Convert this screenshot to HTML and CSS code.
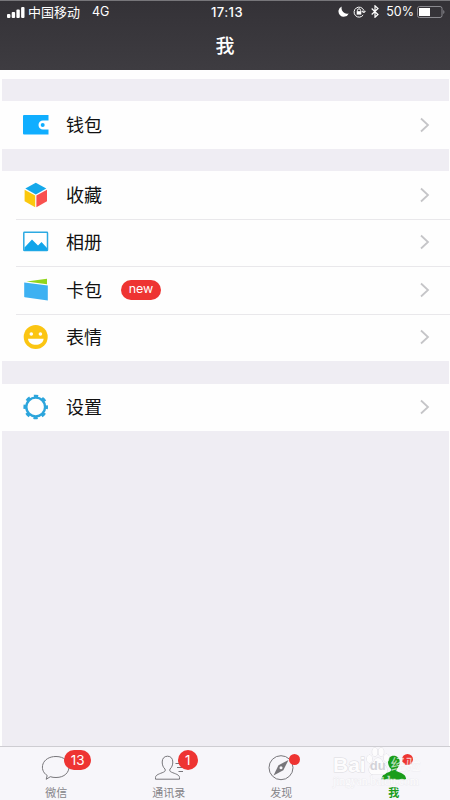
FILE: index.html
```html
<!DOCTYPE html>
<html lang="zh-CN">
<head>
  <meta charset="utf-8">
  <meta name="viewport" content="width=device-width, initial-scale=1">
  <title>我</title>
  <link rel="stylesheet" href="styles.css">
</head>
<body>
  <header class="header">
    <div class="status">
      <div class="status-left">
        <svg class="signal" width="18" height="11" viewBox="0 0 18 11" fill="#fff">
          <rect x="0" y="7" width="3.4" height="4" rx="1"/>
          <rect x="4.7" y="5" width="3.4" height="6" rx="1"/>
          <rect x="9.4" y="2.6" width="3.4" height="8.4" rx="1"/>
          <rect x="14.1" y="0" width="3.4" height="11" rx="1"/>
        </svg>
        <span class="carrier">中国移动</span>
        <span>4G</span>
      </div>
      <div class="time">17:13</div>
      <div class="status-right">
        <svg width="11" height="11" viewBox="0 0 11 11"><path d="M3.8.5A5.3 5.3 0 1 0 10.7 7.4 5.5 5.5 0 0 1 3.8.5Z" fill="#fff"/></svg>
        <svg class="lock" width="13" height="12" viewBox="0 0 13 12" fill="none" stroke="#fff">
          <path d="M10.7 4.2A5 5 0 1 0 10.2 9M8.9 5.2h3.4L10.7 7Z"/>
          <path d="M4.4 5.5V4.4a1.6 1.6 0 0 1 3.2 0v1.1"/>
          <rect x="3.7" y="5.2" width="4.6" height="3.4" fill="#fff" stroke="none"/>
        </svg>
        <svg class="bluetooth" width="8" height="13" viewBox="0 0 8 13" fill="none" stroke="#fff" stroke-width="1.2"><path d="M.7 3.5l6.3 6L4 12.3V.8L7 3.5.7 9.5"/></svg>
        <span class="percent">50%</span>
        <svg class="battery" width="28" height="12" viewBox="0 0 28 12">
          <rect x=".5" y=".5" width="24.5" height="11" rx="2" fill="none" stroke="#8b8a90"/>
          <rect x="2" y="2" width="11" height="8" fill="#fff"/>
          <path d="M26.3 4v4c1.5-.5 1.5-3.5 0-4Z" fill="#8b8a90"/>
        </svg>
      </div>
    </div>
    <h1 class="title">我</h1>
  </header>

  <main class="content">
    <section class="group">
      <a class="row">
        <svg class="icon" viewBox="0 0 26 26">
          <path d="M1 3h24.5v5.5H20a4.500 4.500 0 0 0 0 9h5.5v5H1a1 1 0 0 1-1-1V4a1 1 0 0 1 1-1Z" fill="#10aeff"/>
          <path d="M26 9.500h-6.500a3.500 3.500 0 0 0 0 7H26" fill="#fff"/>
          <circle cx="19.7" cy="13" r="2" fill="#10aeff"/>
        </svg>
        <span class="label">钱包</span>
        <svg class="arrow" viewBox="0 0 10 16"><path d="M1 1.5 8 8l-7 6.5"/></svg>
      </a>
    </section>

    <section class="group">
      <a class="row">
        <svg class="icon" viewBox="0 0 26 26">
          <path d="M12.8.8 23.3 6.6 12.8 12.4 2.3 6.6Z" fill="#14a8ea"/>
          <path d="M1.600 7.800l10.600 5.800v11.600L1.600 19.200Z" fill="#fbc80e"/>
          <path d="M24 7.800l-10.600 5.800v11.600L24 19.200Z" fill="#f9514f"/>
        </svg>
        <span class="label">收藏</span>
        <svg class="arrow" viewBox="0 0 10 16"><path d="M1 1.5 8 8l-7 6.5"/></svg>
      </a>
      <a class="row">
        <svg class="icon" viewBox="0 0 26 26">
          <rect x=".8" y="3.300" width="23.700" height="18.200" rx=".6" fill="#fff" stroke="#2caae2" stroke-width="1.500"/>
          <path d="M1.500 18.500 9 10.500l6 6 3.500-3.500 5.500 6v2.500H1.500Z" fill="#10a5ea"/>
        </svg>
        <span class="label">相册</span>
        <svg class="arrow" viewBox="0 0 10 16"><path d="M1 1.5 8 8l-7 6.5"/></svg>
      </a>
      <a class="row">
        <svg class="icon" viewBox="0 0 26 26">
          <path d="M3.500 4.500 24 1.700v5.600Z" fill="#91d51c"/>
          <path d="M1.200 5.500l23.600 3v15L1.800 20.300a.8.8 0 0 1-.6-.8Z" fill="#3db1f2"/>
        </svg>
        <span class="label">卡包</span>
        <span class="new">new</span>
        <svg class="arrow" viewBox="0 0 10 16"><path d="M1 1.5 8 8l-7 6.5"/></svg>
      </a>
      <a class="row">
        <svg class="icon" viewBox="0 0 26 26">
          <circle cx="12.700" cy="13" r="12" fill="#fbc512"/>
          <circle cx="8.300" cy="10" r="1.800" fill="#fff"/>
          <circle cx="17.400" cy="10" r="1.800" fill="#fff"/>
          <path d="M5 14.800h15.600c-.6 8-15 8-15.600 0Z" fill="#fff"/>
        </svg>
        <span class="label">表情</span>
        <svg class="arrow" viewBox="0 0 10 16"><path d="M1 1.5 8 8l-7 6.5"/></svg>
      </a>
    </section>

    <section class="group">
      <a class="row">
        <svg class="icon" viewBox="0 0 26 26" fill="none" stroke="#2ca5dc">
          <circle cx="12.700" cy="13" r="9.400" stroke-width="2.400"/>
          <circle cx="12.700" cy="13" r="11" stroke-width="2.600" stroke-dasharray="4.320 4.320" stroke-dashoffset="2.160"/>
        </svg>
        <span class="label">设置</span>
        <svg class="arrow" viewBox="0 0 10 16"><path d="M1 1.5 8 8l-7 6.5"/></svg>
      </a>
    </section>
  </main>

  <nav class="tabs">
    <a class="tab">
      <div class="tab-icon">
        <svg width="30" height="26" viewBox="0 0 30 26" fill="none" stroke="#77767a"><path d="M6.200 20.500C-2.500 15 .8 1.500 15 1.500c17 0 17.500 21 0 21-2 0-4-.2-5.700-.8L5.200 24.300Z"/></svg>
        <span class="badge wide">13</span>
      </div>
      <span>微信</span>
    </a>
    <a class="tab">
      <div class="tab-icon">
        <svg width="30" height="26" viewBox="0 0 30 26" fill="none" stroke="#77767a">
          <path d="M13.500 1.200c-3.400 0-5.300 2.400-5.300 5.800 0 3 1 5.500 2.800 7 .5 1.500.3 2.500-1.500 3.200C6 18.700 1.500 19.700 1.500 22.500v1.700h24v-1.700c0-2.800-4.500-3.800-8-5.300-1.800-.7-2-1.700-1.500-3.200 1.800-1.500 2.800-4 2.800-7 0-3.400-1.900-5.800-5.300-5.800Z"/>
          <path d="M21.500 8.500H29M23 12.500h6M24.500 16.500H29"/>
        </svg>
        <span class="badge">1</span>
      </div>
      <span>通讯录</span>
    </a>
    <a class="tab">
      <div class="tab-icon">
        <svg width="30" height="26" viewBox="0 0 30 26">
          <circle cx="15" cy="12.700" r="12" fill="none" stroke="#77767a"/>
          <path d="M22.500 5 17.300 15.200 7.500 20.500l5-10.300Z" fill="#77767a"/>
          <circle cx="15" cy="12.700" r="1.500" fill="#f7f6fa"/>
        </svg>
        <span class="dot"></span>
      </div>
      <span>发现</span>
    </a>
    <a class="tab active">
      <div class="tab-icon">
        <svg width="30" height="26" viewBox="0 0 30 26"><path d="M14.700.8c-3.500 0-5.700 2.500-5.700 6 0 3 1.100 5.300 2.900 6.900.5 1.600.1 2.500-1.700 3.200C6.500 18.300 2.700 19.500 2.500 24.500h24.700c-.2-5-4-6.200-7.700-7.600-1.800-.7-2.200-1.600-1.700-3.200 1.800-1.600 2.900-3.900 2.900-6.900 0-3.500-2.500-6-6-6Z" fill="#1a9d1a"/></svg>
        <span class="dot"></span>
      </div>
      <span>我</span>
    </a>
  </nav>

  <div class="watermark">
    <div class="mark-name">
      <span>Bai</span>
      <span class="paw">
        <svg width="24" height="29" viewBox="0 0 27 29" preserveAspectRatio="none" fill="#fff" stroke="#d0cfd4" stroke-width=".9">
          <ellipse cx="4" cy="12" rx="3" ry="4"/>
          <ellipse cx="10" cy="5" rx="3" ry="4.200"/>
          <ellipse cx="17" cy="5" rx="3" ry="4.200"/>
          <ellipse cx="23" cy="11" rx="3" ry="4"/>
          <path d="M13.500 11c-4 0-5 5-8.500 8-3 3-1.500 8.500 3 8.500h11c5 0 6-5 3-8.500-3-3-4.500-8-8.500-8Z"/>
        </svg>
        <span class="du">du</span>
      </span>
      <span class="jingyan">经验</span>
    </div>
    <div class="mark-url">jingyan.baidu.com</div>
  </div>
</body>
</html>
```
FILE: styles.css
```css
* {
  box-sizing: border-box;
}
body {
  margin: 0;
  height: 800px;
  display: flex;
  flex-direction: column;
  overflow: hidden;
  background: #fefefe;
  color: #111;
  font-family: Inter, "Noto Sans CJK SC", sans-serif;
}
.header {
  height: 70px;
  border-top: 1px solid #77767a;
  background: linear-gradient(#343237, #3e3c41);
  color: #fff;
}
.status {
  height: 22px;
  display: grid;
  grid-template-columns: 1fr auto 1fr;
  align-items: center;
  padding: 0 5px 0 7px;
  font-size: 12.5px;
  line-height: 20px;
}
.status-left,
.status-right {
  display: flex;
  align-items: center;
}
.carrier {
  margin: 0 12px 0 3px;
  font-size: 13px;
}
.time {
  padding-left: 2px;
  font-weight: 500;
  font-size: 13px;
  letter-spacing: 0.4px;
}
.status-right {
  justify-content: flex-end;
}
.status-right svg {
  margin-top: -1px;
}
.status-right .lock {
  margin-left: 4px;
}
.status-right .bluetooth {
  margin: -1px 7px 0 5px;
}
.percent {
  font-size: 12.5px;
}
.status-right .battery {
  margin-left: 3px;
}
.title {
  margin: 10px 0 0;
  font-size: 19px;
  line-height: 28px;
  font-weight: 500;
  text-align: center;
}
.content {
  flex: 1;
  display: flex;
  flex-direction: column;
  gap: 22.5px;
  margin: 9px 1px 0 2px;
  padding-top: 22px;
  background: #efedf3;
}
.group {
  margin: 0 -1px 0 -2px;
  background: #fefefe;
}
.row {
  height: 47.5px;
  display: flex;
  align-items: center;
  padding: 0 20px 0 23px;
  position: relative;
}
.row + .row::before {
  content: "";
  position: absolute;
  top: 0;
  left: 16px;
  right: 0;
  height: 1px;
  background: #e9e8eb;
}
.icon {
  width: 26px;
  height: 26px;
}
.label {
  margin-left: 17px;
  padding-top: 2px;
  font-size: 18px;
  line-height: 26px;
}
.new {
  margin-left: 19px;
  width: 40px;
  height: 20px;
  border-radius: 10px;
  background: #ee3432;
  color: #fff;
  font-size: 12.5px;
  line-height: 18px;
  text-align: center;
}
.arrow {
  width: 10px;
  height: 16px;
  margin-left: auto;
  fill: none;
  stroke: #c5c5c8;
  stroke-width: 1.8;
}
.tabs {
  height: 54px;
  display: grid;
  grid-template-columns: repeat(4, 1fr);
  border-top: 1px solid #cecdd2;
  background: #f7f6fa;
}
.tab {
  display: flex;
  flex-direction: column;
  align-items: center;
  padding-top: 8px;
  color: #858488;
  font-size: 11px;
  line-height: 16px;
}
.tab.active {
  color: #1a9d1a;
  font-weight: 700;
}
.tab-icon {
  position: relative;
  height: 30px;
}
.badge {
  position: absolute;
  top: -5px;
  left: 24px;
  width: 20px;
  height: 20px;
  border-radius: 10px;
  background: #ee3432;
  color: #fff;
  font-size: 13.5px;
  line-height: 20px;
  text-align: center;
}
.badge.wide {
  left: 23px;
  width: 27px;
}
.dot {
  position: absolute;
  top: -1px;
  left: 23px;
  width: 11px;
  height: 11px;
  border-radius: 50%;
  background: #ee3432;
}
.watermark {
  position: absolute;
  left: 333px;
  top: 746px;
  color: #fff;
  opacity: 0.75;
  paint-order: stroke fill;
  -webkit-text-stroke: 1px #d2d1d6;
}
.mark-name {
  display: flex;
  align-items: flex-end;
  height: 30px;
  font: 700 21px/22px "Liberation Sans", "Noto Sans CJK SC", sans-serif;
}
.paw {
  position: relative;
  height: 29px;
  font-size: 13px;
}
.du {
  position: absolute;
  left: 4px;
  bottom: -1px;
  -webkit-text-stroke: 0;
  color: #c8c7cd;
}
.jingyan {
  margin-left: 1px;
  font-weight: 300;
  font-size: 15px;
  -webkit-text-stroke: 0.3px #e4e3e8;
}
.mark-url {
  font: 11.5px/10px "Liberation Serif", serif;
  -webkit-text-stroke: 0.6px #e4e3e8;
}
```
